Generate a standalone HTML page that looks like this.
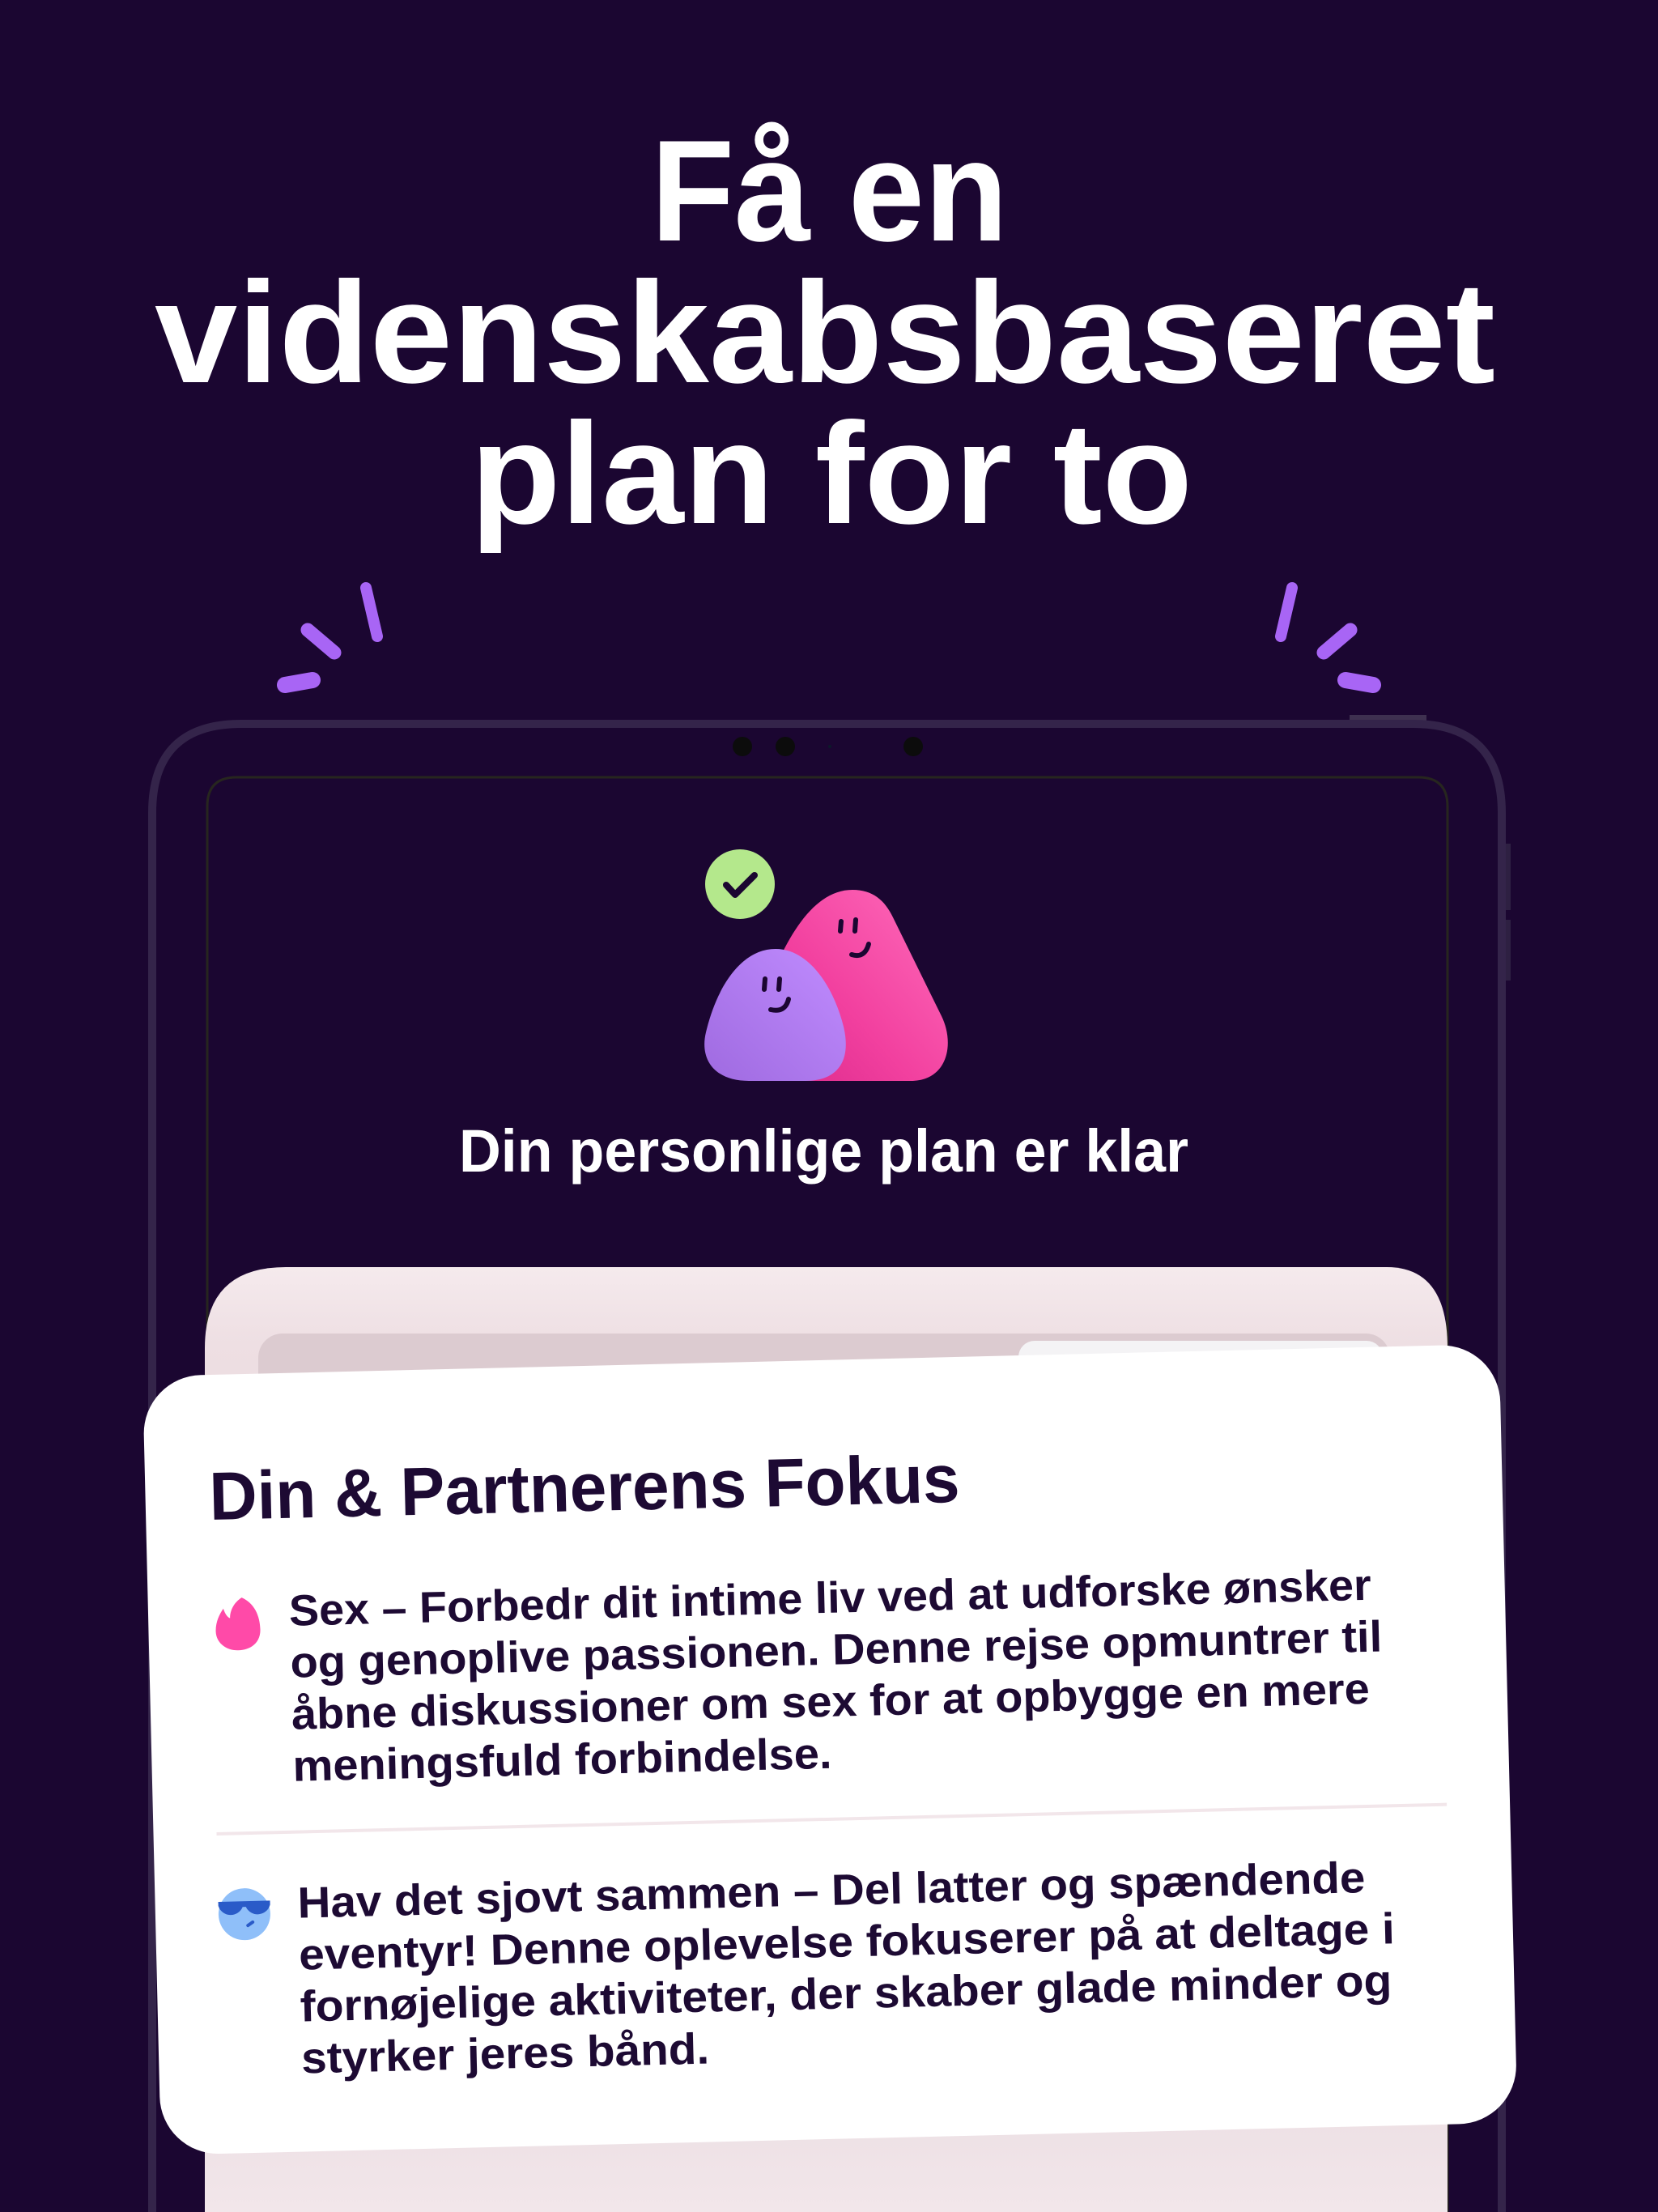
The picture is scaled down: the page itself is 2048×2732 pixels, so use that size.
<!DOCTYPE html>
<html><head><meta charset="utf-8"><style>
html,body{margin:0;padding:0;background:#1b0631;}
body{width:2048px;height:2732px;overflow:hidden;position:relative;}
svg{position:absolute;left:0;top:0;overflow:hidden;}
</style></head><body>
<svg width="2048" height="2732" viewBox="0 0 2048 2732" xmlns="http://www.w3.org/2000/svg">
<defs>
<linearGradient id="pink" x1="1" y1="0" x2="0" y2="1"><stop offset="0" stop-color="#ff6cbb"/><stop offset="0.6" stop-color="#f2409f"/><stop offset="1" stop-color="#dc2a8c"/></linearGradient>
<linearGradient id="purp" x1="1" y1="0" x2="0" y2="1"><stop offset="0" stop-color="#c08cff"/><stop offset="1" stop-color="#9f6ae0"/></linearGradient>
<linearGradient id="pale" x1="0" y1="0" x2="0" y2="1"><stop offset="0" stop-color="#f5eaed"/><stop offset="0.08" stop-color="#eedfe3"/><stop offset="0.55" stop-color="#dccdd2"/><stop offset="1" stop-color="#f2e6ea"/></linearGradient>
</defs>
<rect width="2048" height="2732" fill="#1b0631"/>
<g font-family="Liberation Sans, sans-serif" font-weight="bold" fill="#ffffff" font-size="178">
<text x="804" y="297" textLength="441" lengthAdjust="spacingAndGlyphs">Få en</text>
<text x="191" y="472" textLength="1656" lengthAdjust="spacingAndGlyphs">videnskabsbaseret</text>
<text x="581" y="646" textLength="892" lengthAdjust="spacingAndGlyphs">plan for to</text>
</g>
<g stroke="#a865f5" stroke-linecap="round" fill="none">
<line x1="452" y1="726" x2="466" y2="786" stroke-width="14"/>
<line x1="380" y1="778" x2="413" y2="806" stroke-width="17"/>
<line x1="352" y1="846" x2="386" y2="840" stroke-width="20"/>
<line x1="1596" y1="726" x2="1582" y2="786" stroke-width="14"/>
<line x1="1668" y1="778" x2="1635" y2="806" stroke-width="17"/>
<line x1="1696" y1="846" x2="1662" y2="840" stroke-width="20"/>
</g>
<rect x="1667" y="883" width="95" height="8" fill="#3e3050"/>
<rect x="1858" y="1042" width="8" height="82" fill="#2e2042"/>
<rect x="1858" y="1136" width="8" height="75" fill="#2e2042"/>
<path d="M188 2732 L188 1004 Q188 894 298 894 L1745 894 Q1855 894 1855 1004 L1855 2732" fill="#1b0631" stroke="#34244a" stroke-width="10"/>
<path d="M256 2732 L256 996 Q256 960 292 960 L1752 960 Q1788 960 1788 996 L1788 2732" fill="#1b0631" stroke="#27261f" stroke-width="3"/>
<circle cx="917" cy="922" r="12" fill="#0c0c0c"/>
<circle cx="970" cy="922" r="12" fill="#0c0c0c"/>
<circle cx="1025" cy="922" r="2" fill="#0c1a2a"/>
<circle cx="1128" cy="922" r="12" fill="#0c0c0c"/>
<circle cx="914" cy="1092" r="43" fill="#b4e88c"/>
<path d="M897 1093 L908 1105 L932 1081" stroke="#1b0631" stroke-width="8" fill="none" stroke-linecap="round" stroke-linejoin="round"/>
<path d="M1053 1099 C1078 1099 1093 1112 1103 1133 L1163 1255 C1180 1290 1170 1335 1125 1335 L960 1335 L960 1190 C985 1135 1015 1099 1053 1099 Z" fill="url(#pink)"/>
<g stroke="#1b0631" stroke-width="6" stroke-linecap="round" fill="none">
<line x1="1039" y1="1138" x2="1038" y2="1150"/><line x1="1057" y1="1136" x2="1056" y2="1150"/>
<path d="M1052 1179 Q1068 1184 1073 1166"/>
</g>
<path d="M958 1172 C1000 1172 1030 1220 1042 1268 C1052 1310 1035 1335 995 1335 L925 1335 C882 1335 864 1308 872 1275 C885 1220 915 1172 958 1172 Z" fill="url(#purp)"/>
<g stroke="#1b0631" stroke-width="6" stroke-linecap="round" fill="none">
<line x1="945" y1="1209" x2="944" y2="1222"/><line x1="963" y1="1209" x2="962" y2="1222"/>
<path d="M952 1247 Q970 1251 974 1234"/>
</g>
<text x="567" y="1447" font-family="Liberation Sans, sans-serif" font-weight="bold" font-size="74" fill="#ffffff" textLength="901" lengthAdjust="spacingAndGlyphs">Din personlige plan er klar</text>
<path d="M253 2732 L253 1665 Q253 1565 353 1565 L1713 1565 Q1788 1565 1788 1665 L1788 2732 Z" fill="url(#pale)"/>
<rect x="319" y="1647" width="1398" height="120" rx="30" fill="#dccbd0"/>
<rect x="1258" y="1656" width="450" height="100" rx="20" fill="#f4f3f5"/>
<g transform="translate(176 1700) rotate(-1.37)">
<rect x="0" y="0" width="1676" height="962" rx="72" fill="#ffffff"/>
<g font-family="Liberation Sans, sans-serif" fill="#1d0a33" font-weight="bold">
<text x="79" y="179" font-size="84" textLength="927" lengthAdjust="spacingAndGlyphs">Din &amp; Partnerens Fokus</text>
<g font-size="54">
<text x="174" y="312" textLength="1337" lengthAdjust="spacingAndGlyphs">Sex – Forbedr dit intime liv ved at udforske ønsker</text>
<text x="174" y="376" textLength="1349" lengthAdjust="spacingAndGlyphs">og genoplive passionen. Denne rejse opmuntrer til</text>
<text x="174" y="440" textLength="1332" lengthAdjust="spacingAndGlyphs">åbne diskussioner om sex for at opbygge en mere</text>
<text x="174" y="504" textLength="666" lengthAdjust="spacingAndGlyphs">meningsfuld forbindelse.</text>
<text x="176" y="673" textLength="1319" lengthAdjust="spacingAndGlyphs">Hav det sjovt sammen – Del latter og spændende</text>
<text x="176" y="737" textLength="1354" lengthAdjust="spacingAndGlyphs">eventyr! Denne oplevelse fokuserer på at deltage i</text>
<text x="176" y="801" textLength="1349" lengthAdjust="spacingAndGlyphs">fornøjelige aktiviteter, der skaber glade minder og</text>
<text x="176" y="865" textLength="504" lengthAdjust="spacingAndGlyphs">styrker jeres bånd.</text>
</g>
</g>
<rect x="78" y="565" width="1520" height="4" fill="#f2e6ea"/>
<path d="M116 276 C135 285 138 305 138 316 C138 332 126 341 110 341 C95 341 83 331 83 317 C83 305 88 296 93 289 C95 296 98 300 101 301 C101 292 106 282 116 276 Z" fill="#ff4aa8"/>
<circle cx="110" cy="667" r="32" fill="#8fbff9"/>
<path d="M78 651 L142 651 L142 656 A16 16 0 0 1 112 658 L108 658 A16 16 0 0 1 78 656 Z" fill="#2a5bc8"/>
<line x1="114" y1="681" x2="120" y2="677" stroke="#2a5bc8" stroke-width="4" stroke-linecap="round"/>
</g>
</svg>
</body></html>
